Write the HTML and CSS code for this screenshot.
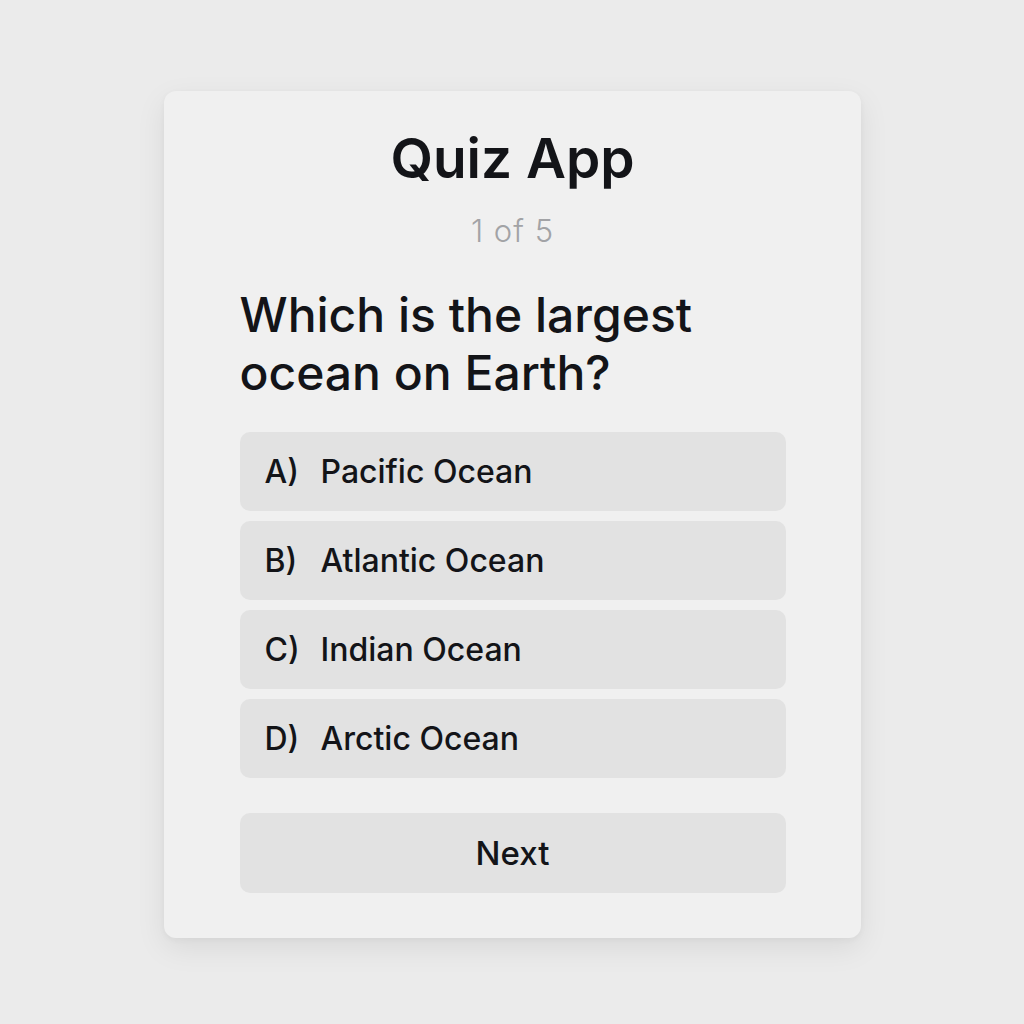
FILE: index.html
```html
<!DOCTYPE html>
<html>
<head>
<meta charset="utf-8">
<link rel="stylesheet" href="styles.css">
</head>
<body>
<div class="card">
  <h1 class="title">Quiz App</h1>
  <div class="progress">1 of 5</div>
  <div class="content">
    <h2 class="question">Which is the largest ocean on Earth?</h2>
    <ul class="options">
      <li class="option"><span class="letter">A)</span><span>Pacific Ocean</span></li>
      <li class="option"><span class="letter">B)</span><span>Atlantic Ocean</span></li>
      <li class="option"><span class="letter">C)</span><span>Indian Ocean</span></li>
      <li class="option"><span class="letter">D)</span><span>Arctic Ocean</span></li>
    </ul>
    <button class="next">Next</button>
  </div>
</div>
</body>
</html>
```
FILE: styles.css
```css
* { box-sizing: border-box; }
html, body { margin: 0; padding: 0; }
body {
  background: #ebebeb;
  font-family: Inter, "Noto Sans", sans-serif;
  color: #131418;
  width: 1024px;
  height: 1024px;
  padding-top: 91px;
  display: flex;
  justify-content: center;
  align-items: flex-start;
}
.card {
  width: 697px;
  height: 847px;
  background: #f0f0f0;
  border-radius: 12px;
  box-shadow: 0 10px 30px rgba(0,0,0,0.08), 0 2px 6px rgba(0,0,0,0.04);
  padding: 0 75px 0 76px;
  display: flex;
  flex-direction: column;
}
.title {
  margin: 37px 0 0;
  text-align: center;
  font-size: 55px;
  font-weight: 600;
  line-height: 60px;
}
.progress {
  margin-top: 23px;
  text-align: center;
  font-size: 31px;
  color: #a2a3a6;
  line-height: 40px;
  font-weight: 300;
  letter-spacing: 1px;
}
.content { margin-top: 35px; }
.question {
  margin: 0;
  font-size: 48px;
  font-weight: 500;
  line-height: 58px;
}
.options {
  list-style: none;
  margin: 30px 0 0;
  padding: 0;
  display: flex;
  flex-direction: column;
  gap: 10px;
}
.option {
  height: 79px;
  background: #e2e2e2;
  border-radius: 10px;
  display: flex;
  align-items: center;
  padding-left: 25px;
  font-size: 32px;
  font-weight: 500;
}
.letter { width: 56px; }
.next {
  margin-top: 35px;
  width: 100%;
  height: 80px;
  border: none;
  background: #e2e2e2;
  border-radius: 10px;
  font-family: inherit;
  font-size: 33px;
  font-weight: 500;
  color: #131418;
}
```
